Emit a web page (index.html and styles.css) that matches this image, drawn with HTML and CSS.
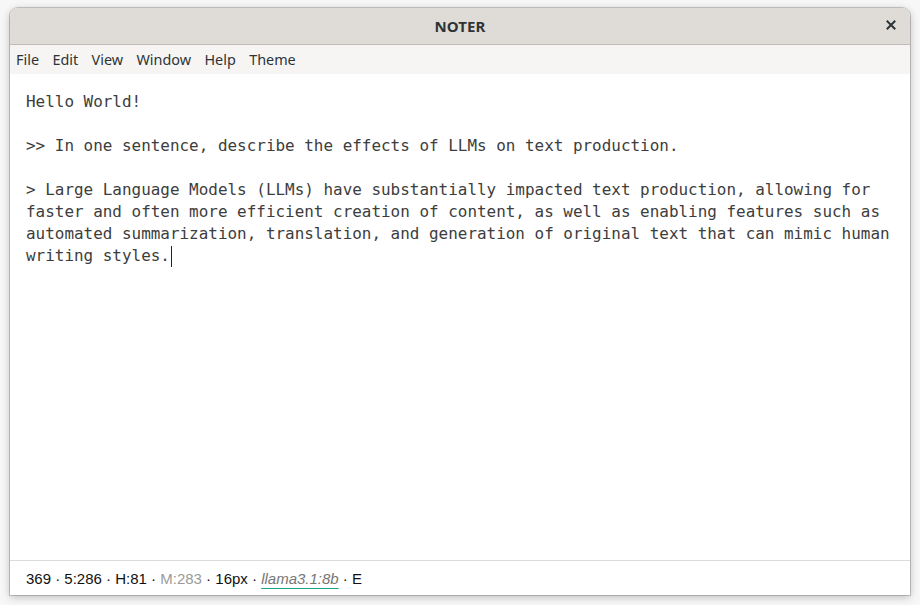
FILE: index.html
```html
<!DOCTYPE html>
<html>
<head>
<meta charset="utf-8">
<link rel="stylesheet" href="styles.css">
</head>
<body>
<div class="window">
  <header class="titlebar">
    <span class="title">NOTER</span>
    <button class="close" aria-label="Close">
      <svg width="10" height="10" viewBox="0 0 10 10"><path d="M1.5 1.5 L8.5 8.5 M8.5 1.5 L1.5 8.5" stroke="#2e3436" stroke-width="2" stroke-linecap="square"/></svg>
    </button>
  </header>
  <nav class="menubar">
    <span class="menu-item">File</span>
    <span class="menu-item">Edit</span>
    <span class="menu-item">View</span>
    <span class="menu-item">Window</span>
    <span class="menu-item">Help</span>
    <span class="menu-item">Theme</span>
  </nav>
  <main class="editor"><p class="line">Hello World!</p>
<p class="line blank"></p>
<p class="line">&gt;&gt; In one sentence, describe the effects of LLMs on text production.</p>
<p class="line blank"></p>
<p class="line">&gt; Large Language Models (LLMs) have substantially impacted text production, allowing for faster and often more efficient creation of content, as well as enabling features such as automated summarization, translation, and generation of original text that can mimic human writing styles.<span class="caret"></span></p></main>
  <footer class="statusbar">
    <span class="status-text">369 · 5:286 · H:81 · <span class="muted">M:283</span> · 16px · <span class="model">llama3.1:8b</span> · E</span>
  </footer>
</div>
</body>
</html>
```
FILE: styles.css
```css
html, body {
  margin: 0;
  padding: 0;
}
body {
  background: #f7f7f7;
  padding: 8px 10px 0 10px;
  height: 605px;
  box-sizing: border-box;
  overflow: hidden;
}
.window {
  width: 900px;
  height: 587px;
  display: flex;
  flex-direction: column;
  background: #ffffff;
  border-radius: 8px 8px 0 0;
  box-shadow: 0 0 0 1px rgba(0,0,0,0.18), 0 2px 8px rgba(0,0,0,0.25);
  overflow: hidden;
}
.titlebar {
  height: 36px;
  flex: 0 0 36px;
  background: #dfdcd8;
  border-bottom: 1px solid #bfbbb7;
  display: flex;
  align-items: center;
  justify-content: center;
  position: relative;
}
.title {
  font-family: "Noto Sans", sans-serif;
  font-weight: 700;
  font-size: 15px;
  color: #2e3436;
  letter-spacing: 0.1px;
}
.close {
  position: absolute;
  right: 14px;
  top: 12px;
  width: 10px;
  height: 10px;
  padding: 0;
  border: 0;
  background: none;
  display: flex;
}
.menubar {
  height: 29px;
  flex: 0 0 29px;
  box-sizing: border-box;
  padding: 0 0 1px 6px;
  background: #f6f5f4;
  display: flex;
  align-items: center;
  gap: 13.4px;
  font-family: "Noto Sans", sans-serif;
  font-size: 14.4px;
  color: #2e3436;
}
.editor {
  flex: 1;
  padding: 17px 10px 0 16px;
  font-family: "DejaVu Sans Mono", monospace;
  font-size: 15.95px;
  line-height: 22px;
  color: #3d3d3d;
}
.line {
  margin: 0;
  white-space: pre-wrap;
}
.blank {
  height: 22px;
}
.caret {
  display: inline-block;
  width: 1px;
  height: 21px;
  background: #222;
  vertical-align: -6px;
  margin-left: 1px;
}
.statusbar {
  height: 33px;
  flex: 0 0 33px;
  border-top: 1px solid #dcdcdc;
  display: flex;
  align-items: center;
  padding-left: 16px;
  padding-top: 1px;
  font-family: "Liberation Sans", Arial, sans-serif;
  font-size: 15px;
  color: #111;
  white-space: pre;
}
.muted {
  color: #9a9a9a;
}
.model {
  font-style: italic;
  color: #777;
  text-decoration: underline;
  text-decoration-color: #1aa38c;
  text-decoration-thickness: 1px;
  text-underline-offset: 4px;
}
```
